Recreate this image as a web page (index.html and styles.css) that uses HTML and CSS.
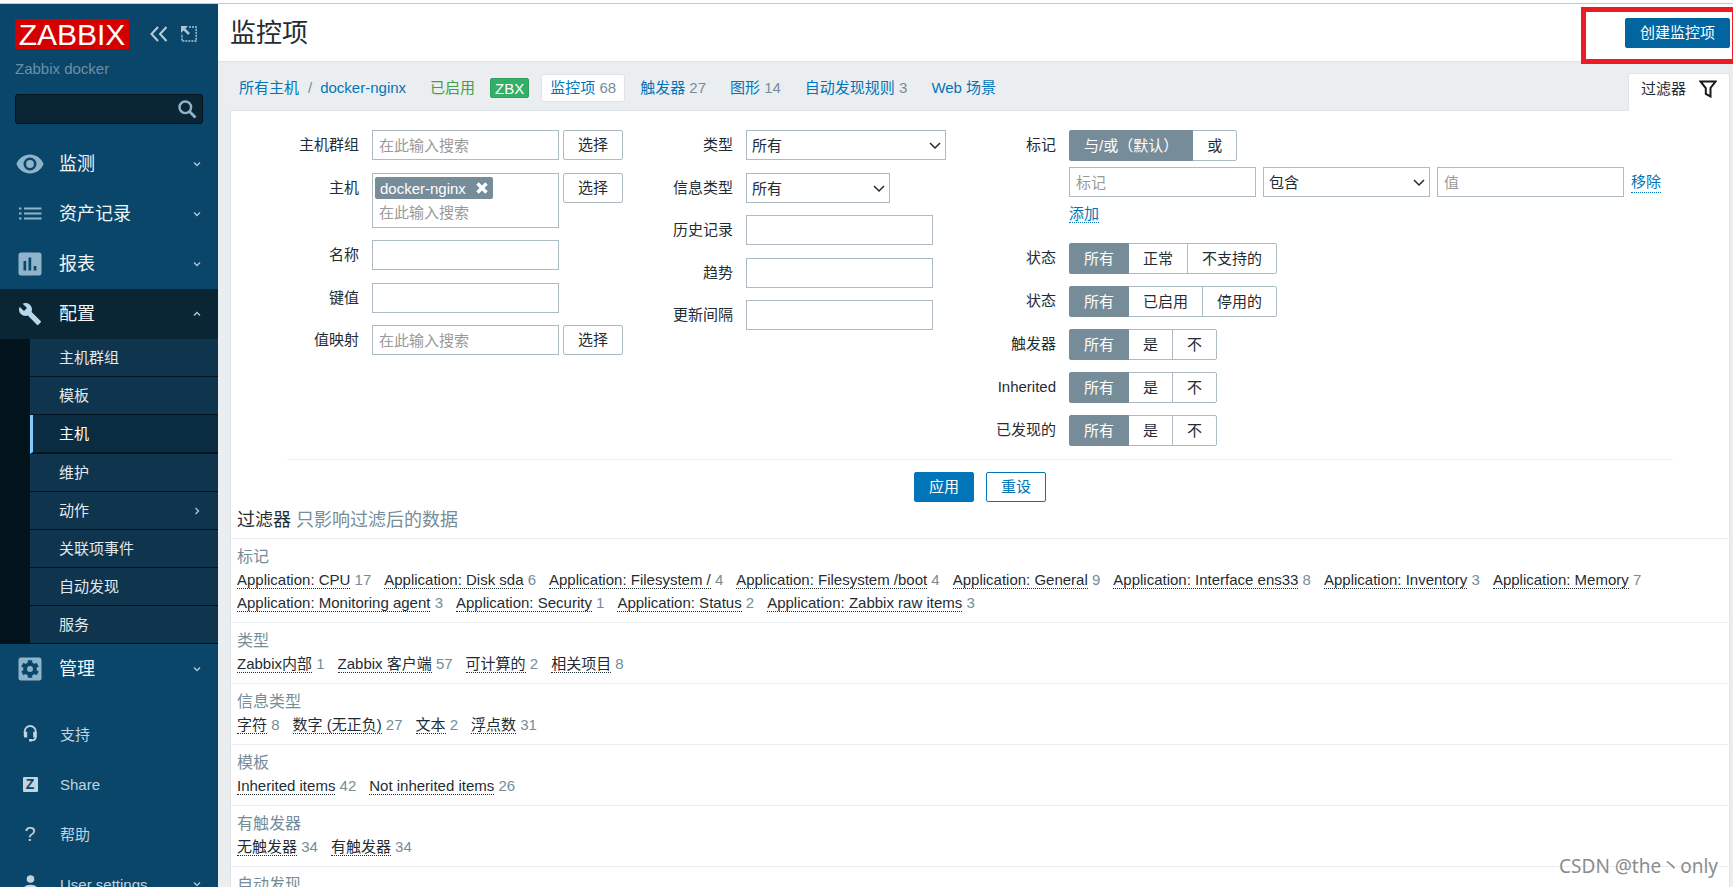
FILE: index.html
```html
<!DOCTYPE html>
<html lang="zh-CN">
<head>
<meta charset="utf-8">
<title>监控项</title>
<link rel="stylesheet" href="styles.css">
</head>
<body>
<div class="top-edge"></div>
<div class="app">
  <aside class="sidebar">
    <div class="brand">
      <a class="logo" href="#">ZABBIX</a>
      <button class="icon-button" type="button" aria-label="收起">
        <svg width="18" height="16" viewBox="0 0 18 16" fill="none" stroke="#b8cedb" stroke-width="2"><path d="M8 1 1.500 8 8 15M16.500 1 10 8l6.500 7"/></svg>
      </button>
      <button class="icon-button" type="button" aria-label="隐藏">
        <svg width="16" height="16" viewBox="0 0 16 16" fill="none" stroke="#a9c4d4"><path stroke-width="1.500" stroke-dasharray="2 1" d="M8 1h7.200v14H1V8"/><path stroke-width="2.500" d="M2 2l6 6"/><path fill="#a9c4d4" stroke="none" d="M0 0h7L0 7z"/></svg>
      </button>
    </div>
    <div class="server-name">Zabbix docker</div>
    <form class="search">
      <input type="text" aria-label="搜索">
      <button class="icon-button" type="button" aria-label="搜索">
        <svg width="19" height="19" viewBox="0 0 19 19" fill="none" stroke="#8fb3c9"><circle cx="7.300" cy="7.300" r="5.800" stroke-width="2.400"/><path stroke-width="2.800" d="M11.500 11.500 17.500 17.500"/></svg>
      </button>
    </form>
    <nav class="menu">
      <a class="menu-item" href="#">
        <svg class="menu-icon" viewBox="0 0 30 30"><path fill-rule="evenodd" d="M15 5.500c6 0 11.300 3.800 13.600 9.500-2.300 5.700-7.600 9.500-13.600 9.500S3.700 20.700 1.400 15C3.700 9.300 9 5.500 15 5.500zm0 3a6.500 6.500 0 1 0 0 13 6.500 6.500 0 0 0 0-13zm0 2.600a3.900 3.900 0 1 1 0 7.800 3.900 3.900 0 0 1 0-7.800z"/></svg>
        <span>监测</span>
        <svg class="chevron" viewBox="0 0 8 8"><path d="M1 2.500 4 5.500 7 2.500"/></svg>
      </a>
      <a class="menu-item" href="#">
        <svg class="menu-icon" viewBox="0 0 30 30"><path d="M4 8.500h2.500v2H4zm5 0h17.500v2H9zM4 13.500h2.500v2H4zm5 0h17.500v2H9zM4 18.500h2.500v2H4zm5 0h17.500v2H9z"/></svg>
        <span>资产记录</span>
        <svg class="chevron" viewBox="0 0 8 8"><path d="M1 2.500 4 5.500 7 2.500"/></svg>
      </a>
      <a class="menu-item" href="#">
        <svg class="menu-icon" viewBox="0 0 30 30"><path fill-rule="evenodd" d="M6 3.500h18a2.500 2.500 0 0 1 2.500 2.500v18a2.500 2.500 0 0 1-2.500 2.500H6A2.500 2.500 0 0 1 3.500 24V6A2.500 2.500 0 0 1 6 3.500zM8.500 12v9.500h2.700V12zm5-3.500v13h2.700v-13zm5.200 8.500v4.500h2.700V17z"/></svg>
        <span>报表</span>
        <svg class="chevron" viewBox="0 0 8 8"><path d="M1 2.500 4 5.500 7 2.500"/></svg>
      </a>
      <a class="menu-item menu-item-open" href="#">
        <svg class="menu-icon" viewBox="0 0 30 30"><path transform="translate(3 3)" d="M22.700 19l-9.100-9.100c.9-2.300.4-5-1.500-6.900-2-2-5-2.400-7.400-1.300L9 6 6 9 1.600 4.700C.4 7.100.9 10.100 2.900 12.100c1.900 1.900 4.600 2.400 6.900 1.500l9.100 9.100c.4.4 1 .4 1.400 0l2.300-2.300c.5-.4.5-1.100.1-1.400z"/></svg>
        <span>配置</span>
        <svg class="chevron" viewBox="0 0 8 8"><path d="M1 5.500 4 2.500 7 5.500"/></svg>
      </a>
      <div class="submenu">
        <a href="#">主机群组</a>
        <a href="#">模板</a>
        <a class="selected" href="#">主机</a>
        <a href="#">维护</a>
        <a href="#">动作<svg class="chevron" viewBox="0 0 8 8"><path d="M2.500 1 5.500 4 2.500 7"/></svg></a>
        <a href="#">关联项事件</a>
        <a href="#">自动发现</a>
        <a href="#">服务</a>
      </div>
      <a class="menu-item" href="#">
        <svg class="menu-icon" viewBox="0 0 30 30"><rect x="3.500" y="3.500" width="23" height="23" rx="2.500"/><g fill="#0a466a"><circle cx="15" cy="15" r="6.800"/><path d="M12.800 6.200h4.400v17.600h-4.400z"/><path transform="rotate(60 15 15)" d="M12.800 6.200h4.400v17.600h-4.400z"/><path transform="rotate(120 15 15)" d="M12.800 6.200h4.400v17.600h-4.400z"/></g><circle cx="15" cy="15" r="3"/></svg>
        <span>管理</span>
        <svg class="chevron" viewBox="0 0 8 8"><path d="M1 2.500 4 5.500 7 2.500"/></svg>
      </a>
    </nav>
    <nav class="menu menu-user">
      <a class="menu-item" href="#">
        <svg class="menu-icon" viewBox="0 0 30 30"><path fill="none" stroke="#c2d4df" stroke-width="1.800" d="M9.700 14v-1.500a5.500 5.500 0 0 1 11 0V18c0 2.400-1.500 3.300-4.200 3.300"/><path d="M8.800 12.800h3.400v5.700H10a1.200 1.200 0 0 1-1.200-1.200zM18.200 12.800h3.400v5.700h-3.400zM14 20h3v2.600h-3z"/></svg>
        <span>支持</span>
      </a>
      <a class="menu-item" href="#">
        <span class="menu-icon"><span class="share-mark" aria-hidden="true">Z</span></span>
        <span>Share</span>
      </a>
      <a class="menu-item" href="#">
        <span class="menu-icon help-mark" aria-hidden="true">?</span>
        <span>帮助</span>
      </a>
      <a class="menu-item" href="#">
        <svg class="menu-icon" viewBox="0 0 30 30"><circle cx="15.500" cy="10" r="3.800"/><path d="M8.500 22.500v-2.300c0-2.800 3-4.400 7-4.400s7 1.600 7 4.400v2.300z"/></svg>
        <span>User settings</span>
        <svg class="chevron" viewBox="0 0 8 8"><path d="M1 2.500 4 5.500 7 2.500"/></svg>
      </a>
    </nav>
  </aside>

  <main class="page">
    <header class="page-header">
      <h1>监控项</h1>
      <button class="button button-create" type="button">创建监控项</button>
      <div class="highlight"></div>
    </header>
    <div class="content">
      <div class="nav-row">
        <nav class="crumbs">
          <a href="#">所有主机</a><span class="slash">/</span><a href="#">docker-nginx</a>
          <span class="enabled">已启用</span>
          <span class="badge">ZBX</span>
        </nav>
        <nav class="tabs">
          <a class="active" href="#">监控项 <span>68</span></a>
          <a href="#">触发器 <span>27</span></a>
          <a href="#">图形 <span>14</span></a>
          <a href="#">自动发现规则 <span>3</span></a>
          <a href="#">Web 场景</a>
        </nav>
        <button class="filter-tab" type="button">过滤器
          <svg width="18" height="18" viewBox="0 0 18 18" fill="none" stroke="#1a1a1a" stroke-width="2"><path d="M1.500 1.500h15L11.500 8v8.500L6.800 14V8z"/></svg>
        </button>
      </div>

      <section class="panel">
        <form>
          <div class="form-columns">
            <div class="form-grid">
              <label for="groups">主机群组</label>
              <div class="field tall"><input id="groups" class="box" type="text" placeholder="在此输入搜索"><button class="button button-plain" type="button">选择</button></div>
              <label for="hosts">主机</label>
              <div class="field">
                <div class="multiselect">
                  <span class="chip">docker-nginx<button class="icon-button" type="button" aria-label="移除"><svg width="12" height="12" viewBox="0 0 12 12" stroke="#fff" stroke-width="3.400"><path d="M1.500 1.500l9 9M10.500 1.500l-9 9"/></svg></button></span>
                  <input id="hosts" type="text" placeholder="在此输入搜索">
                </div>
                <button class="button button-plain" type="button">选择</button>
              </div>
              <label for="name">名称</label>
              <div class="field tall"><input id="name" class="box" type="text"></div>
              <label for="key">键值</label>
              <div class="field"><input id="key" class="box" type="text"></div>
              <label for="valuemap">值映射</label>
              <div class="field"><input id="valuemap" class="box" type="text" placeholder="在此输入搜索"><button class="button button-plain" type="button">选择</button></div>
            </div>

            <div class="form-grid">
              <label for="type">类型</label>
              <div class="field tall"><span class="select select-wide"><select id="type"><option>所有</option></select><svg viewBox="0 0 12 8"><path d="M1 1l5 5 5-5"/></svg></span></div>
              <label for="valuetype">信息类型</label>
              <div class="field"><span class="select select-narrow"><select id="valuetype"><option>所有</option></select><svg viewBox="0 0 12 8"><path d="M1 1l5 5 5-5"/></svg></span></div>
              <label for="history">历史记录</label>
              <div class="field tall"><input id="history" class="box" type="text"></div>
              <label for="trends">趋势</label>
              <div class="field"><input id="trends" class="box" type="text"></div>
              <label for="delay">更新间隔</label>
              <div class="field"><input id="delay" class="box" type="text"></div>
            </div>

            <div class="form-grid">
              <span class="label">标记</span>
              <div class="tags">
                <div class="segments" role="radiogroup" aria-label="标记">
                  <label><input type="radio" name="evaltype" checked><span>与/或（默认）</span></label>
                  <label><input type="radio" name="evaltype"><span>或</span></label>
                </div>
                <div class="tag-row">
                  <input class="box" type="text" placeholder="标记" aria-label="标记">
                  <span class="select select-mid"><select aria-label="操作符"><option>包含</option></select><svg viewBox="0 0 12 8"><path d="M1 1l5 5 5-5"/></svg></span>
                  <input class="box" type="text" placeholder="值" aria-label="值">
                  <a class="dotted" href="#">移除</a>
                </div>
                <div class="add-row"><a class="dotted" href="#">添加</a></div>
              </div>
              <span class="label">状态</span>
              <div class="segments" role="radiogroup" aria-label="状态">
                <label><input type="radio" name="state" checked><span>所有</span></label>
                <label><input type="radio" name="state"><span>正常</span></label>
                <label><input type="radio" name="state"><span>不支持的</span></label>
              </div>
              <span class="label">状态</span>
              <div class="segments" role="radiogroup" aria-label="状态">
                <label><input type="radio" name="status" checked><span>所有</span></label>
                <label><input type="radio" name="status"><span>已启用</span></label>
                <label><input type="radio" name="status"><span>停用的</span></label>
              </div>
              <span class="label">触发器</span>
              <div class="segments" role="radiogroup" aria-label="触发器">
                <label><input type="radio" name="triggers" checked><span>所有</span></label>
                <label><input type="radio" name="triggers"><span>是</span></label>
                <label><input type="radio" name="triggers"><span>不</span></label>
              </div>
              <span class="label">Inherited</span>
              <div class="segments" role="radiogroup" aria-label="Inherited">
                <label><input type="radio" name="inherited" checked><span>所有</span></label>
                <label><input type="radio" name="inherited"><span>是</span></label>
                <label><input type="radio" name="inherited"><span>不</span></label>
              </div>
              <span class="label">已发现的</span>
              <div class="segments" role="radiogroup" aria-label="已发现的">
                <label><input type="radio" name="discovered" checked><span>所有</span></label>
                <label><input type="radio" name="discovered"><span>是</span></label>
                <label><input type="radio" name="discovered"><span>不</span></label>
              </div>
            </div>
          </div>
          <div class="form-actions">
            <button class="button button-primary" type="button">应用</button>
            <button class="button button-outline" type="button">重设</button>
          </div>
        </form>

        <h4 class="sub-title">过滤器 <span>只影响过滤后的数据</span></h4>
        <div class="subfilter">
          <h3>标记</h3>
          <ul>
            <li><a href="#">Application: CPU</a> 17</li>
            <li><a href="#">Application: Disk sda</a> 6</li>
            <li><a href="#">Application: Filesystem /</a> 4</li>
            <li><a href="#">Application: Filesystem /boot</a> 4</li>
            <li><a href="#">Application: General</a> 9</li>
            <li><a href="#">Application: Interface ens33</a> 8</li>
            <li><a href="#">Application: Inventory</a> 3</li>
            <li><a href="#">Application: Memory</a> 7</li>
            <li><a href="#">Application: Monitoring agent</a> 3</li>
            <li><a href="#">Application: Security</a> 1</li>
            <li><a href="#">Application: Status</a> 2</li>
            <li><a href="#">Application: Zabbix raw items</a> 3</li>
          </ul>
        </div>
        <div class="subfilter">
          <h3>类型</h3>
          <ul>
            <li><a href="#">Zabbix内部</a> 1</li>
            <li><a href="#">Zabbix 客户端</a> 57</li>
            <li><a href="#">可计算的</a> 2</li>
            <li><a href="#">相关项目</a> 8</li>
          </ul>
        </div>
        <div class="subfilter">
          <h3>信息类型</h3>
          <ul>
            <li><a href="#">字符</a> 8</li>
            <li><a href="#">数字 (无正负)</a> 27</li>
            <li><a href="#">文本</a> 2</li>
            <li><a href="#">浮点数</a> 31</li>
          </ul>
        </div>
        <div class="subfilter">
          <h3>模板</h3>
          <ul>
            <li><a href="#">Inherited items</a> 42</li>
            <li><a href="#">Not inherited items</a> 26</li>
          </ul>
        </div>
        <div class="subfilter">
          <h3>有触发器</h3>
          <ul>
            <li><a href="#">无触发器</a> 34</li>
            <li><a href="#">有触发器</a> 34</li>
          </ul>
        </div>
        <div class="subfilter">
          <h3>自动发现</h3>
        </div>
      </section>
    </div>
  </main>
</div>
<div class="watermark">CSDN @the丶only</div>
</body>
</html>
```

FILE: styles.css
```css
* {
  box-sizing: border-box;
}

body {
  margin: 0;
  height: 100vh;
  display: flex;
  flex-direction: column;
  overflow: hidden;
  position: relative;
  background: #fff;
  color: #1f2c33;
  font: 15px/23px "Liberation Sans", "Noto Sans CJK SC", sans-serif;
}

a {
  color: #0275b8;
  text-decoration: none;
}

input,
select,
button {
  font: inherit;
  color: inherit;
  margin: 0;
}

.top-edge {
  flex: none;
  height: 4px;
  border-bottom: 1px solid #c9c9c9;
}

.app {
  flex: 1;
  min-height: 0;
  display: flex;
}

.icon-button {
  display: flex;
  padding: 0;
  border: 0;
  background: none;
}

/* Sidebar */

.sidebar {
  flex: none;
  width: 218px;
  padding-top: 15px;
  overflow: hidden;
  background: #0a466a;
}

.brand {
  display: flex;
  align-items: center;
  gap: 13px;
  padding-left: 15px;
}

.logo {
  width: 114px;
  height: 30px;
  margin-right: 8px;
  background: #d40000;
  color: #fff;
  font-size: 30px;
  line-height: 31px;
  text-align: center;
}

.server-name {
  padding: 8px 15px 0;
  color: #6c90a6;
}

.search {
  display: flex;
  align-items: center;
  height: 30px;
  margin: 14px 15px 0;
  padding: 0 5px;
  border: 1px solid #04121b;
  border-radius: 3px;
  background: #0a2635;
}

.search input {
  flex: 1;
  min-width: 0;
  border: 0;
  background: none;
  color: #fff;
}

.menu {
  padding-top: 15px;
}

.menu-item {
  display: flex;
  align-items: center;
  gap: 14px;
  height: 50px;
  padding: 0 17px 0 15px;
  color: #f2f6f8;
  font-size: 18px;
}

.menu-icon {
  width: 30px;
  height: 30px;
  fill: #8fb3c9;
}

.menu-item-open {
  background: #0a2635;
}

.menu-item-open .menu-icon {
  fill: #b5d8ee;
}

.chevron {
  width: 8px;
  height: 8px;
  margin-left: auto;
  fill: none;
  stroke: #b4cad7;
  stroke-width: 1.3px;
}

.submenu {
  padding-left: 30px;
  background: #02131c;
}

.submenu a {
  display: flex;
  align-items: center;
  height: 38px;
  padding: 0 17px 0 29px;
  border-bottom: 1px solid #04141f;
  background: #0f344d;
  color: #e2eaee;
}

.submenu .selected {
  height: 39px;
  padding-left: 26px;
  border-bottom-width: 2px;
  border-left: 3px solid #80caff;
  background: #0a2c40;
  color: #fff;
}

.menu-user .menu-item {
  gap: 15px;
  color: #c2d4df;
  font-size: 15px;
}

.menu-user .menu-icon {
  display: flex;
  align-items: center;
  justify-content: center;
  fill: #c2d4df;
}

.share-mark {
  width: 15px;
  height: 15px;
  border-radius: 1px;
  background: #c2d4df;
  color: #0a466a;
  font-size: 14px;
  font-weight: bold;
  line-height: 15px;
  text-align: center;
}

.help-mark {
  font-size: 20px;
}

/* Page header */

.page {
  flex: 1;
  min-width: 0;
  overflow: hidden;
  background: #ebeef0;
}

.page-header {
  position: relative;
  display: flex;
  align-items: center;
  justify-content: space-between;
  height: 58px;
  padding: 0 3px 0 12px;
  border-bottom: 1px solid #dfe4e7;
  background: #fff;
}

h1 {
  margin: 0;
  font-size: 26px;
  font-weight: normal;
  line-height: 36px;
}

.highlight {
  position: absolute;
  top: 3px;
  right: -4px;
  width: 156px;
  height: 57px;
  border: 5px solid #ed1c24;
  pointer-events: none;
}

.button {
  height: 30px;
  padding: 0 14px;
  border: 1px solid #0275b8;
  border-radius: 2px;
  line-height: 28px;
}

.button-create {
  border-color: #02659f;
  background: #02659f;
  color: #fff;
}

.button-primary {
  background: #0275b8;
  color: #fff;
}

.button-outline {
  background: #fff;
  color: #0275b8;
}

.button-plain {
  border-color: #acbbc2;
  background: #fff;
}

/* Object navigation */

.content {
  padding: 0 3px 0 12px;
}

.nav-row {
  display: flex;
  height: 48px;
}

.crumbs {
  display: flex;
  padding: 13px 0 0 9px;
  line-height: 26px;
}

.slash {
  padding: 0 8px 0 9px;
  color: #768d99;
}

.enabled {
  margin-left: 24px;
  color: #429e47;
}

.badge {
  height: 20px;
  margin: 3px 13px 0 15px;
  padding: 0 4px;
  border: 1px solid #2f9f5e;
  border-radius: 2px;
  background: #34af67;
  color: #fff;
  line-height: 19px;
}

.tabs {
  display: flex;
  gap: 8px;
  padding-top: 13px;
  line-height: 26px;
}

.tabs a {
  height: 26px;
  padding: 0 8px;
}

.tabs .active {
  background: #fff;
  box-shadow: 0 0 0 1px #dfe4e7;
  border-radius: 2px;
}

.tabs span {
  color: #768d99;
}

.filter-tab {
  display: flex;
  align-items: center;
  gap: 13px;
  height: 38px;
  margin: 11px 0 0 auto;
  padding: 0 12px 8px;
  border: 1px solid #dfe4e7;
  border-bottom: 0;
  border-radius: 2px 2px 0 0;
  background: #fff;
  position: relative;
}

/* Filter form */

.panel {
  border: 1px solid #dfe4e7;
  background: #fff;
}

.form-columns {
  display: flex;
  justify-content: center;
  gap: 50px;
  margin: 0 56px;
  padding: 19px 0 13px;
  border-bottom: 1px solid #ebeef0;
}

.form-grid {
  display: grid;
  grid-template-columns: auto auto;
  align-content: start;
  align-items: start;
  gap: 12px 13px;
}

.form-grid > label,
.label {
  line-height: 30px;
  text-align: right;
}

.field {
  display: flex;
  align-items: flex-start;
  gap: 4px;
}

.tall {
  padding-bottom: 1px;
}

.box,
.multiselect {
  width: 187px;
  height: 30px;
  padding: 0 6px;
  border: 1px solid #acbbc2;
  background: #fff;
}

::placeholder {
  color: #9a9a9a;
  opacity: 1;
}

.multiselect {
  height: auto;
  padding: 3px 2px 2px;
}

.multiselect input {
  display: block;
  width: 100%;
  height: 26px;
  padding: 0 4px;
  border: 0;
}

.chip {
  display: flex;
  align-items: center;
  gap: 10px;
  width: max-content;
  height: 22px;
  padding: 0 5px;
  border-radius: 2px;
  background: #768d99;
  color: #fff;
}

.select {
  position: relative;
  display: block;
}

.select-wide {
  width: 200px;
}

.select-mid {
  width: 167px;
}

.select-narrow {
  width: 144px;
}

.select select {
  display: block;
  width: 100%;
  height: 30px;
  padding: 0 24px 0 5px;
  border: 1px solid #acbbc2;
  border-radius: 0;
  background: #fff;
  appearance: none;
}

.select svg {
  position: absolute;
  top: 12px;
  right: 5px;
  width: 12px;
  height: 8px;
  fill: none;
  stroke: #1f2c33;
  stroke-width: 1.5px;
  pointer-events: none;
}

.segments {
  display: flex;
}

.segments input {
  position: absolute;
  opacity: 0;
}

.segments span {
  display: block;
  height: 31px;
  padding: 0 14px;
  border: 1px solid #acbbc2;
  line-height: 29px;
}

.segments label + label span {
  margin-left: -1px;
}

.segments label:first-child span {
  border-radius: 2px 0 0 2px;
}

.segments label:last-child span {
  border-radius: 0 2px 2px 0;
}

.segments input:checked + span {
  position: relative;
  border-color: #768d99;
  background: #768d99;
  color: #fff;
}

.tag-row {
  display: flex;
  align-items: center;
  gap: 7px;
  margin-top: 6px;
}

.add-row {
  padding: 5px 0 6px;
}

.dotted {
  border-bottom: 1px dotted #0275b8;
}

.tag-row .dotted {
  line-height: 20px;
}

.form-actions {
  display: flex;
  justify-content: center;
  gap: 12px;
  padding-top: 12px;
}

/* Subfilter */

.sub-title {
  margin: 0;
  padding: 6px 6px;
  font-size: 18px;
  font-weight: normal;
  line-height: 24px;
}

.sub-title span {
  color: #768d99;
}

.subfilter {
  padding: 7px 6px 8px;
  border-top: 1px solid #ebeef0;
}

.subfilter h3 {
  margin: 0;
  color: #768d99;
  font-size: 16px;
  font-weight: normal;
  line-height: 22px;
}

.subfilter ul {
  display: flex;
  flex-wrap: wrap;
  column-gap: 13px;
  margin: 0;
  padding: 0;
  list-style: none;
  color: #768d99;
}

.subfilter li a {
  border-bottom: 1px dotted #1f2c33;
  color: #1f2c33;
}

.watermark {
  position: absolute;
  right: 15px;
  bottom: 8px;
  color: #8c8c8c;
  font-family: "Noto Sans", "Noto Sans CJK SC", sans-serif;
  font-size: 19px;
  line-height: 26px;
}
```
